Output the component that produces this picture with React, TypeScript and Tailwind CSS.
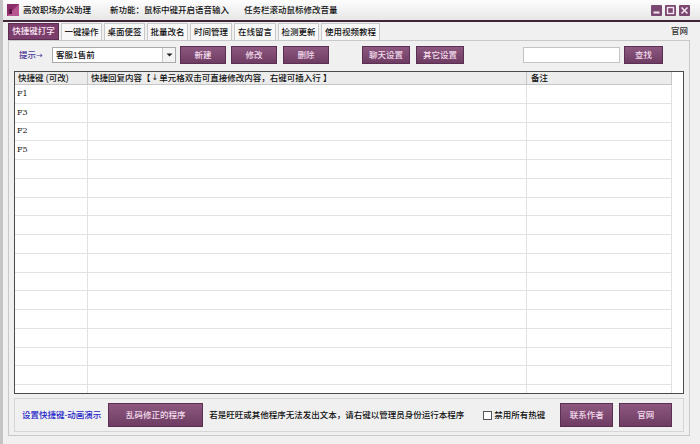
import React from "react";

const btn =
  "flex items-center justify-center bg-gradient-to-b from-[#8d5880] to-[#6e3c62] border border-[#5b2f52] text-[#f3dcec] text-[8.5px] leading-none";

function WinBtn({ kind }: { kind: "min" | "max" | "close" }) {
  return (
    <div className="w-[11px] h-[11px] bg-[#7a4870] rounded-[1px] flex items-center justify-center">
      <svg width="9" height="9" viewBox="0 0 9 9">
        {kind === "min" && <rect x="1.5" y="5.5" width="6" height="2" fill="#f4e6f0" />}
        {kind === "max" && <rect x="1.5" y="1.5" width="6" height="6" fill="none" stroke="#f4e6f0" strokeWidth="1.4" />}
        {kind === "close" && (
          <path d="M1.5 1.5 L7.5 7.5 M7.5 1.5 L1.5 7.5" stroke="#f4e6f0" strokeWidth="1.6" />
        )}
      </svg>
    </div>
  );
}

const tabs: [string, string][] = [
  ["快捷键打字", "w-[51px]"],
  ["一键操作", "w-[41px]"],
  ["桌面便签", "w-[41px]"],
  ["批量改名", "w-[41px]"],
  ["时间管理", "w-[42px]"],
  ["在线留言", "w-[42px]"],
  ["检测更新", "w-[41px]"],
  ["使用视频教程", "w-[59px]"],
];

const rows = ["F1", "F3", "F2", "F5", "", "", "", "", "", "", "", "", "", "", "", "", "", ""];

export default function App() {
  return (
    <div className="w-[700px] h-[444px] bg-[#f0f0f0] flex flex-col overflow-hidden border-l-[3px] border-[#c4c4c4] text-[#111] font-medium font-['Liberation_Sans','Noto_Sans_CJK_SC',sans-serif] text-[8.5px] leading-none">
      {/* title bar */}
      <div className="h-[22px] shrink-0 flex items-center bg-gradient-to-b from-[#fdfdfd] to-[#e7e7e7] border-b-[2px] border-[#3e2538] -ml-[3px]">
        <svg className="ml-[7px]" width="12" height="12" viewBox="0 0 12 12">
          <rect x="0" y="0" width="12" height="12" fill="#8b2d68" />
          <path d="M0 12 L12 0 L12 12 Z" fill="#b7558f" />
          <rect x="2" y="5" width="3" height="5" fill="#5e1646" />
        </svg>
        <span className="ml-[4px]">高效职场办公助理</span>
        <span className="ml-[19px]">新功能：鼠标中键开启语音输入</span>
        <span className="ml-[15px]">任务栏滚动鼠标修改音量</span>
        <div className="ml-auto mr-[10px] flex gap-[3px]">
          <WinBtn kind="min" />
          <WinBtn kind="max" />
          <WinBtn kind="close" />
        </div>
      </div>

      {/* tabs */}
      <div className="h-[18px] shrink-0 flex items-end pl-[5px] relative">
        <div className="flex gap-[2px] items-end">
          {tabs.map(([t, w], i) => (
            <div
              key={t}
              className={
                w +
                " h-[17px] flex items-center justify-center border " +
                (i === 0
                  ? "bg-[#7b3d6c] border-[#5c2c51] text-[#fbe9f5]"
                  : "bg-[#f7f7f7] border-[#c9c9c9] border-b-0")
              }
            >
              {t}
            </div>
          ))}
        </div>
        <span className="ml-auto mr-[12px] mb-[5px] text-[#333]">官网</span>
      </div>

      {/* main panel */}
      <div className="ml-[5px] mr-[10px] h-[396px] shrink-0 border border-[#c8c8c8] bg-[#f0f0f0] px-[5px] pt-[5px] flex flex-col">
        {/* toolbar */}
        <div className="h-[18px] flex items-center shrink-0">
          <span className="ml-[5px] w-[33px] text-[#4a3c99] whitespace-nowrap">
            提示<span className="font-['DejaVu_Sans',sans-serif] text-[8px]">→</span>
          </span>
          <div className="w-[124px] h-[16px] bg-white border border-[#a9a9a9] flex items-center">
            <span className="ml-[3px] flex-1">客服1售前</span>
            <div className="w-[13px] h-[14px] border-l border-[#c8c8c8] bg-[#f4f4f4] flex items-center justify-center">
              <svg width="7" height="4" viewBox="0 0 7 4">
                <path d="M0.5 0.5 L6.5 0.5 L3.5 3.5 Z" fill="#222" />
              </svg>
            </div>
          </div>
          <div className={btn + " ml-[4px] w-[46px] h-[18px]"}>新建</div>
          <div className={btn + " ml-[5px] w-[46px] h-[18px]"}>修改</div>
          <div className={btn + " ml-[6px] w-[46px] h-[18px]"}>删除</div>
          <div className={btn + " ml-[33px] w-[48px] h-[18px]"}>聊天设置</div>
          <div className={btn + " ml-[6px] w-[48px] h-[18px]"}>其它设置</div>
          <div className="ml-[59px] w-[97px] h-[16px] bg-white border border-[#c4c4c4]" />
          <div className={btn + " ml-[4px] w-[39px] h-[18px]"}>查找</div>
        </div>

        {/* table */}
        <div className="mt-[7px] h-[323px] shrink-0 border border-[#4a4a4a] bg-white overflow-hidden">
          <div className="flex h-[13px] shrink-0">
            <div className="w-[73px] bg-[#ececec] border-r border-b border-[#c6c6c6] flex items-center pl-[3px] whitespace-nowrap">快捷键 (可改)</div>
            <div className="w-[439px] bg-[#ececec] border-r border-b border-[#c6c6c6] flex items-center pl-[3px] whitespace-nowrap">
              快捷回复内容【 <span className="font-['DejaVu_Sans',sans-serif] text-[8px] mx-[1px]">↓</span>单元格双击可直接修改内容，右键可插入行 】
            </div>
            <div className="w-[145px] bg-[#ececec] border-r border-b border-[#c6c6c6] flex items-center pl-[4px]">备注</div>
          </div>
          {rows.map((r, i) => (
            <div key={i} className="flex h-[18.75px]">
              <div className="w-[73px] border-r border-b border-[#e2e2e2] flex items-center pl-[2px] text-[8px] font-['DejaVu_Serif',serif] text-[#111]">
                {r}
              </div>
              <div className="w-[439px] border-r border-b border-[#e2e2e2]" />
              <div className="w-[145px] border-r border-b border-[#e2e2e2]" />
            </div>
          ))}
        </div>

        {/* bottom group */}
        <div className="mt-[4px] h-[34px] shrink-0 border border-[#d6d6d6] flex items-center">
          <span className="ml-[7px] text-[#2424c8]">设置快捷键-动画演示</span>
          <div className={btn + " ml-[7px] w-[95px] h-[24px]"}>乱码修正的程序</div>
          <span className="ml-[6px] whitespace-nowrap">若是旺旺或其他程序无法发出文本，请右键以管理员身份运行本程序</span>
          <div className="ml-[19px] w-[9px] h-[9px] bg-white border border-[#555]" />
          <span className="ml-[2px]">禁用所有热键</span>
          <div className={btn + " ml-[15px] w-[53px] h-[24px]"}>联系作者</div>
          <div className={btn + " ml-[6px] w-[53px] h-[24px]"}>官网</div>
        </div>
      </div>
    </div>
  );
}
